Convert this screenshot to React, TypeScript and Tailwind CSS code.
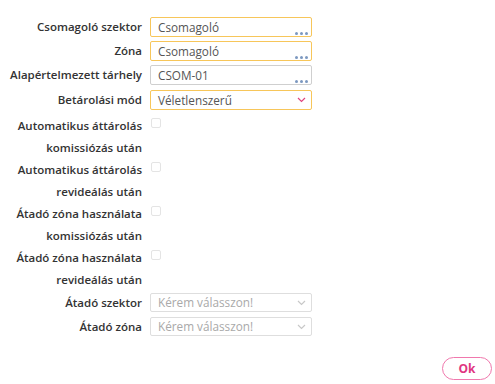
import React from "react";

const Dots = () => (
  <span className="absolute right-[3px] bottom-[1px] flex gap-[2px]">
    <span className="w-[3px] h-[3px] rounded-full bg-[#7c98c0]" />
    <span className="w-[3px] h-[3px] rounded-full bg-[#7c98c0]" />
    <span className="w-[3px] h-[3px] rounded-full bg-[#7c98c0]" />
  </span>
);

const Chevron = ({ color }: { color: string }) => (
  <svg className="absolute right-[5px] top-1/2 -translate-y-1/2" width="9" height="6" viewBox="0 0 9 6" fill="none">
    <path d="M1 1L4.5 4.5L8 1" stroke={color} strokeWidth="1.2" />
  </svg>
);

function Label({ children }: { children: React.ReactNode }) {
  return (
    <div className="w-[142px] shrink-0 whitespace-nowrap text-right text-[11.5px] font-semibold text-[#333] leading-[20px]">{children}</div>
  );
}

function InputRow({ label, value, border, kind }: { label: string; value: string; border: string; kind: "dots" | "select" }) {
  return (
    <div className="flex items-center gap-[8px] h-[20px]">
      <Label>{label}</Label>
      <div className={`relative w-[162px] h-[20px] border rounded-[2px] bg-white ${border} pl-[7px] text-[11.75px] leading-[18px] text-[#555]`}>
        {value}
        {kind === "dots" ? <Dots /> : <Chevron color="#e0447f" />}
      </div>
    </div>
  );
}

function CheckRow({ l1, l2 }: { l1: string; l2: string }) {
  return (
    <div className="flex gap-[9px]">
      <div className="w-[142px] shrink-0 whitespace-nowrap text-right text-[11.5px] font-semibold text-[#333] leading-[22px]">
        {l1}
        <br />
        {l2}
      </div>
      <div className="mt-[3px] w-[10px] h-[10px] border border-[#e4e4e4] rounded-[2px] bg-white" />
    </div>
  );
}

function DisabledRow({ label }: { label: string }) {
  return (
    <div className="flex items-center gap-[8px] h-[19px]">
      <Label>{label}</Label>
      <div className="relative w-[162px] h-[19px] border border-[#dedede] rounded-[2px] bg-white pl-[7px] text-[11.75px] leading-[17px] text-[#a9a9a9]">
        Kérem válasszon!
        <Chevron color="#c8c8c8" />
      </div>
    </div>
  );
}

export default function App() {
  return (
    <div className="w-[495px] h-[384px] bg-white relative" style={{ fontFamily: '"Open Sans", sans-serif' }}>
      <div className="flex flex-col pt-[17px]">
        <div className="flex flex-col gap-[4px]">
          <InputRow label="Csomagoló szektor" value="Csomagoló" border="border-[#f7c65a]" kind="dots" />
          <InputRow label="Zóna" value="Csomagoló" border="border-[#f7c65a]" kind="dots" />
          <InputRow label="Alapértelmezett tárhely" value="CSOM-01" border="border-[#cfcfcf]" kind="dots" />
          <div className="mt-[1px]">
            <InputRow label="Betárolási mód" value="Véletlenszerű" border="border-[#f7c65a]" kind="select" />
          </div>
        </div>
        <div className="flex flex-col mt-[5px]">
          <CheckRow l1="Automatikus áttárolás" l2="komissiózás után" />
          <CheckRow l1="Automatikus áttárolás" l2="revideálás után" />
          <CheckRow l1="Átadó zóna használata" l2="komissiózás után" />
          <CheckRow l1="Átadó zóna használata" l2="revideálás után" />
        </div>
        <div className="flex flex-col gap-[5px] mt-[2px]">
          <DisabledRow label="Átadó szektor" />
          <DisabledRow label="Átadó zóna" />
        </div>
      </div>
      <button className="absolute left-[442px] top-[357px] w-[50px] h-[23px] rounded-full border border-[#f078ad] text-[#e0357f] text-[12px] font-bold leading-[21px] bg-white">
        Ok
      </button>
    </div>
  );
}
